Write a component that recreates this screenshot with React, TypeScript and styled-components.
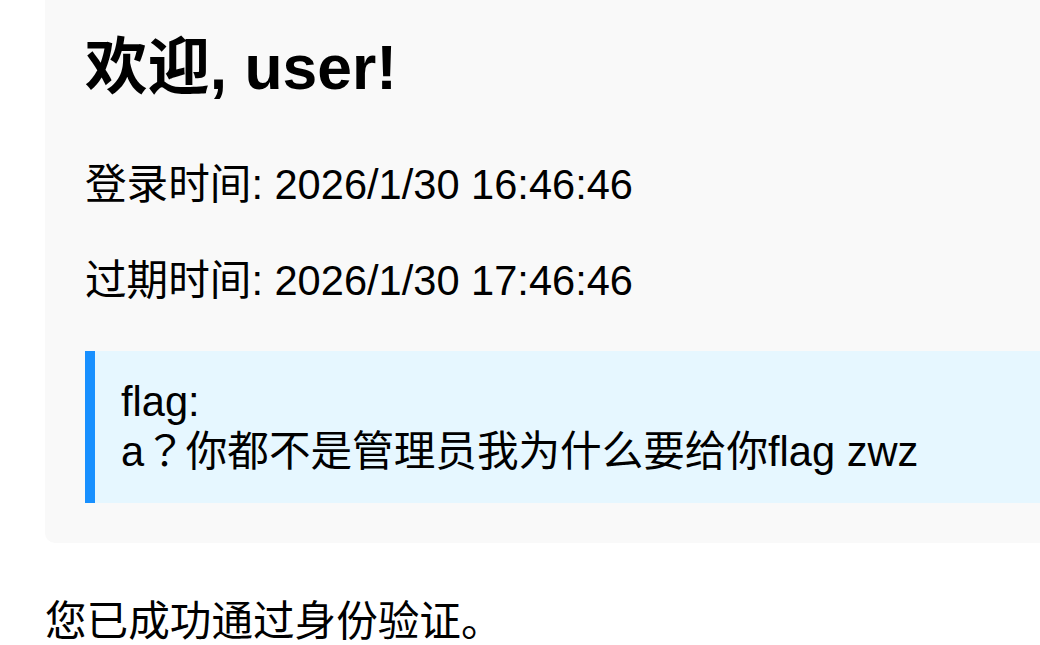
import React from "react";
import styled, { createGlobalStyle } from "styled-components";

const Global = createGlobalStyle`
  html, body { margin: 0; padding: 0; background: #fff; overflow: hidden; }
  body {
    font-family: "Liberation Sans", "Noto Sans CJK SC", sans-serif;
    color: #000;
    width: 1040px;
    height: 645px;
  }
`;

const Page = styled.div`
  padding-left: 45px;
  display: flex;
  flex-direction: column;
  width: 1200px;
`;

const Card = styled.section`
  margin-top: -40px;
  background: #f9f9f9;
  border-radius: 10px;
  padding: 72px 40px 40px;
  display: flex;
  flex-direction: column;
`;

const Title = styled.h2`
  margin: 0 0 56px;
  font-size: 62.4px;
  line-height: 72px;
  font-weight: 700;
`;

const Info = styled.p`
  margin: 0 0 46px;
  font-size: 41.6px;
  line-height: 50px;
`;

const FlagBox = styled.div`
  margin-top: -1px;
  background: #e6f7ff;
  border-left: 10px solid #1890ff;
  padding: 26px 26px;
  font-family: "Liberation Sans", "Noto Sans CJK TC", sans-serif;
  font-size: 41.6px;
  line-height: 50px;
`;

const Note = styled.p`
  margin: 54px 0 0;
  font-size: 41.6px;
  line-height: 50px;
`;

export default function App() {
  return (
    <>
      <Global />
      <Page>
        <Card>
          <Title>欢迎, user!</Title>
          <Info>登录时间: 2026/1/30 16:46:46</Info>
          <Info>过期时间: 2026/1/30 17:46:46</Info>
          <FlagBox>
            flag:
            <br />
            a？你都不是管理员我为什么要给你flag zwz
          </FlagBox>
        </Card>
        <Note>您已成功通过身份验证。</Note>
      </Page>
    </>
  );
}
